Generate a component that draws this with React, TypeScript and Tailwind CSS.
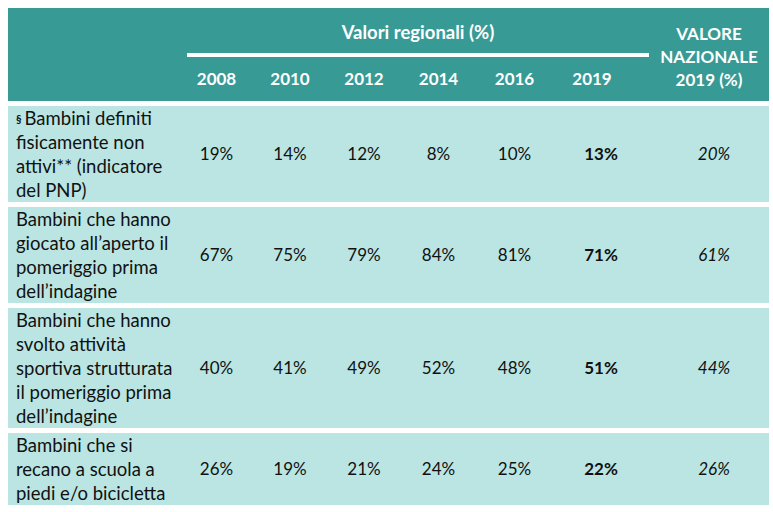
import React from "react";

const rows = [
  {
    label: ["Bambini definiti", "fisicamente non", "attivi** (indicatore", "del PNP)"],
    sup: true,
    vals: ["19%", "14%", "12%", "8%", "10%"],
    y19: "13%",
    naz: "20%",
  },
  {
    label: ["Bambini che hanno", "giocato all\u2019aperto il", "pomeriggio prima", "dell\u2019indagine"],
    vals: ["67%", "75%", "79%", "84%", "81%"],
    y19: "71%",
    naz: "61%",
  },
  {
    label: ["Bambini che hanno", "svolto attivit\u00e0", "sportiva strutturata", "il pomeriggio prima", "dell\u2019indagine"],
    vals: ["40%", "41%", "49%", "52%", "48%"],
    y19: "51%",
    naz: "44%",
  },
  {
    label: ["Bambini che si", "recano a scuola a", "piedi e/o bicicletta"],
    vals: ["26%", "19%", "21%", "24%", "25%"],
    y19: "22%",
    naz: "26%",
  },
];

const years = ["2008", "2010", "2012", "2014", "2016"];
const grid = "grid grid-cols-[172px_73px_74px_74px_75px_77px_96px_120px]";

export default function App() {
  return (
    <div className="w-[773px] h-[512px] bg-white p-[8px] text-[17px] leading-[24px]" style={{ fontFamily: "Lato, 'Open Sans', sans-serif" }}>
      <div className="w-[761px] flex flex-col gap-[5px]">
        {/* header */}
        <div className="flex bg-[#389a95] text-white font-bold h-[93px]">
          <div className="w-[172px]" />
          <div className="w-[469px] flex flex-col">
            <div className="h-[45px] flex items-center justify-center pl-[7px] pt-[3px] text-[18.5px]">Valori regionali (%)</div>
            <div className="ml-[7px] w-[462px] h-[4px] bg-white" />
            <div className="h-[44px] grid grid-cols-[73px_74px_74px_75px_77px_96px] items-center">
              {years.map((y) => (
                <div key={y} className="text-center">{y}</div>
              ))}
              <div className="text-center pr-[18px]">2019</div>
            </div>
          </div>
          <div className="w-[120px] flex flex-col items-center justify-center leading-[23px] pt-[3px] text-center">
            <div>VALORE</div>
            <div>NAZIONALE</div>
            <div>2019 (%)</div>
          </div>
        </div>
        {rows.map((r, i) => (
          <div key={i} className={`${grid} bg-[#bae5e3] text-[#111]`}>
            <div className="pl-[8px] whitespace-nowrap text-[18.5px]">
              {r.label.map((l, j) => (
                <div key={j}>
                  {j === 0 && r.sup ? (
                    <>
                      <sup className="font-bold text-[11px] mr-[3px] relative top-[-2px]">§</sup>
                      {l}
                    </>
                  ) : (
                    l
                  )}
                </div>
              ))}
            </div>
            {r.vals.map((v, j) => (
              <div key={j} className="flex items-center justify-center">{v}</div>
            ))}
            <div className="flex items-center justify-center font-bold">{r.y19}</div>
            <div className="flex items-center justify-center italic pl-[10px]">{r.naz}</div>
          </div>
        ))}
      </div>
    </div>
  );
}
